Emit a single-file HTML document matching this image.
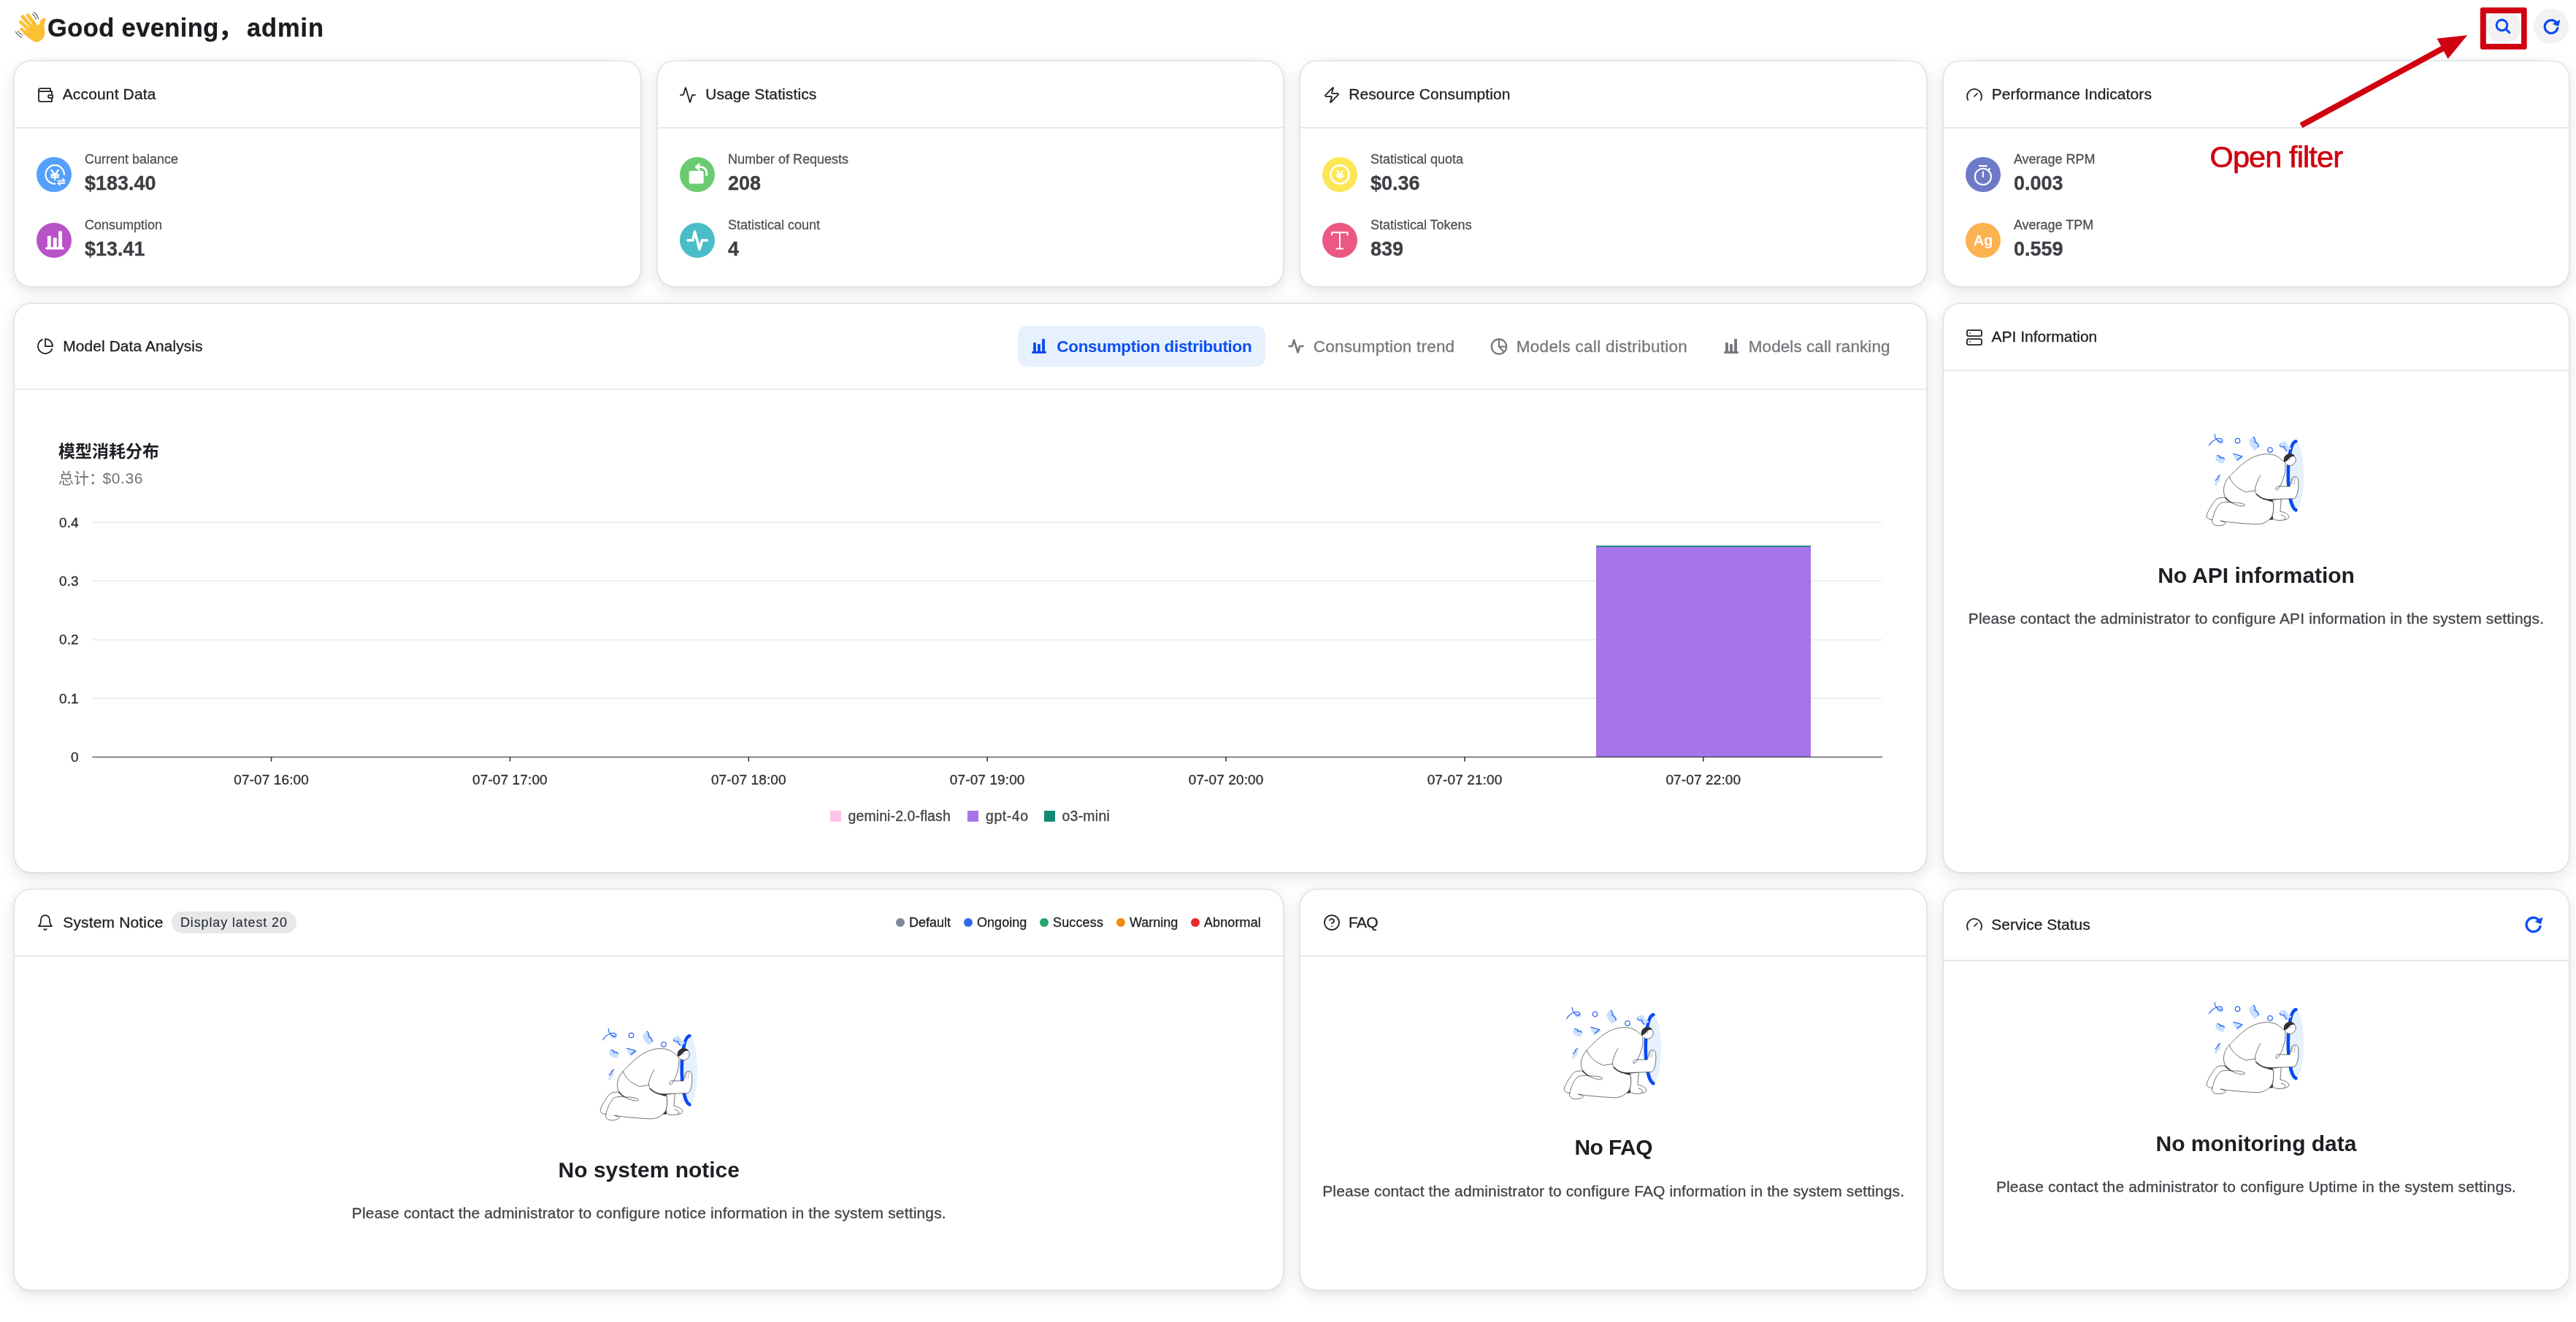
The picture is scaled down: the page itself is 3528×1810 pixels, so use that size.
<!DOCTYPE html>
<html lang="en"><head><meta charset="utf-8"><title>Dashboard</title>
<style>
*{box-sizing:border-box;margin:0;padding:0}
html,body{width:3528px;height:1810px;background:#fff}
#root{position:relative;width:3528px;height:1810px;overflow:hidden;background:#fff;font-family:"Liberation Sans","Noto Sans CJK SC",sans-serif;color:#1c1f23;will-change:transform;-webkit-text-stroke:.3px}
.abs{position:absolute;white-space:nowrap}
.card{position:absolute;background:#fff;border:1px solid #dedede;border-radius:24px;box-shadow:0 0 1.5px rgba(0,0,0,.10),0 6px 21px rgba(0,0,0,.115),0 0 10px rgba(0,0,0,.02)}
.hline{position:absolute;height:2px;background:#e9e9ea}
.ht{position:absolute;font-size:21px;line-height:30px;color:#1c1f23;white-space:nowrap}
.hi{position:absolute;width:24px;height:24px;fill:none;stroke:#1c1f23;stroke-width:1.75;stroke-linecap:round;stroke-linejoin:round}
.av{position:absolute;width:48px;height:48px;border-radius:50%}
.av svg{position:absolute;left:0;top:0;width:48px;height:48px}
.lb{position:absolute;font-size:18px;line-height:24px;color:#4d5054;white-space:nowrap}
.vl{position:absolute;font-size:27px;line-height:36px;font-weight:700;color:#3c3f43;white-space:nowrap}
.et{position:absolute;font-size:30px;line-height:42px;font-weight:700;color:#1c1f23;white-space:nowrap;text-align:center;-webkit-text-stroke:0}
.ed{position:absolute;font-size:21px;line-height:30px;color:#414448;white-space:nowrap;text-align:center}
.tab{position:absolute;font-size:21px;line-height:30px;color:#74777b;white-space:nowrap}
.sm{position:absolute;font-size:18px;line-height:24px;white-space:nowrap}
</style></head>
<body>
<div id="root">
<svg class="abs" role="img" aria-label="waving hand" style="left:10px;top:5px;width:80px;height:65px" viewBox="0 0 1627 1322">
<g stroke="#fcc033" stroke-linecap="round" fill="none">
<path d="M775 585L572 318" stroke-width="96"/>
<path d="M690 660L428 362" stroke-width="100"/>
<path d="M625 745L375 512" stroke-width="96"/>
<path d="M570 835L400 715" stroke-width="90"/>
</g>
<path fill="#fcc033" d="M700 540C760 590 830 610 880 585C915 560 905 500 935 455C960 415 1010 395 1045 405C1075 420 1060 470 1035 520C1010 580 1005 640 1025 720C1050 810 1035 900 975 975C915 1040 830 1075 770 1060C700 1040 610 960 520 890L440 830Z"/>
<path d="M1040 420C1070 470 1015 560 1015 650C1025 730 1050 810 1030 890C1000 980 900 1050 790 1058" fill="none" stroke="#ee9a1e" stroke-width="26" stroke-linecap="round" opacity=".45"/>
<path d="M770 1050C700 1030 610 955 520 885L445 828" fill="none" stroke="#f0a326" stroke-width="16" stroke-linecap="round" opacity=".4"/>
<g stroke="#fff" stroke-width="9" stroke-linecap="round" fill="none" opacity=".8"><path d="M698 580L545 405"/><path d="M622 678L458 498"/><path d="M568 790L425 682"/></g>
<g stroke="#444" stroke-width="22" stroke-linecap="round" fill="none"><path d="M735 240Q830 300 865 415"/><path d="M700 292Q775 345 800 435"/><path d="M235 785Q290 890 400 945"/><path d="M300 762Q345 840 428 882"/></g>
</svg>
<div class="abs" style="left:65px;top:13.5px;font-size:34.6px;line-height:48px;font-weight:700;color:#1a1c20;letter-spacing:.35px">Good evening<span style="margin-left:-1.2px;margin-right:4.6px">，</span><span style="letter-spacing:.8px">admin</span></div>
<div class="abs" style="left:3405px;top:12px;width:48px;height:48px;border-radius:50%;background:#f2f2f3"></div>
<svg class="abs" style="left:3405px;top:12px;width:48px;height:48px" viewBox="0 0 48 48"><g fill="none" stroke="#0c4ef2" stroke-width="3.1" stroke-linecap="round"><circle cx="21.5" cy="22.4" r="7.3"/><path d="M27.2 28.1l4.6 4.5"/></g></svg>
<div class="abs" style="left:3470px;top:12px;width:48px;height:48px;border-radius:50%;background:#f2f2f3"></div>
<svg class="abs" style="left:3470px;top:12px;width:48px;height:48px" viewBox="0 0 48 48"><path fill="none" stroke="#0c4ef2" stroke-width="3.2" stroke-linecap="round" d="M31.4 19.4A8.9 8.9 0 1 0 32.8 26.6"/><path fill="#0c4ef2" stroke="#0c4ef2" stroke-width="1.5" stroke-linejoin="round" d="M35.5 16.2L27.3 20.7L33.6 23Z"/></svg>
<div class="card" style="left:19px;top:83px;width:859px;height:310px"></div>
<svg class="hi" style="left:49.7px;top:118.4px" viewBox="0 0 24 24"><path d="M21 12V7H5a2 2 0 0 1 0-4h14v4"/><path d="M3 5v14a2 2 0 0 0 2 2h16v-5"/><path d="M18 12a2 2 0 0 0 0 4h4v-4Z"/></svg><div class="ht" style="left:85.7px;top:114.3px;letter-spacing:0.15px">Account Data</div><div class="hline" style="left:20px;top:174px;width:857px"></div><div class="av" style="left:50px;top:215px;background:#54a0fb"><svg viewBox="0 0 48 48"><g stroke="#fff" fill="none" stroke-linecap="round" stroke-linejoin="round" stroke-width="2.2"><path d="M37.9 23.9A12.7 12.7 0 1 0 25.2 36.6"/><path d="M20.6 18l4.6 6.5 4.6-6.5M25.2 24.5v6.4M20.2 24.5h10M20.2 27.6h10" stroke-width="2.3"/><path d="M29.4 32.6h9.1l-2.6-3M38.5 35.7h-9.1l2.6 2.4" stroke-width="1.9"/></g></svg></div><div class="lb" style="left:115.9px;top:205.6px">Current balance</div><div class="vl" style="left:115.9px;top:233px">$183.40</div><div class="av" style="left:50px;top:305px;background:#ba52c7"><svg viewBox="0 0 48 48"><g fill="#fff"><rect x="12.4" y="33.2" width="25.2" height="3.4" rx="1.4"/><rect x="14.9" y="18" width="4.9" height="16" rx="1"/><rect x="22.8" y="20.4" width="5" height="14" rx="1"/><rect x="30" y="11.4" width="5" height="23" rx="1"/></g></svg></div><div class="lb" style="left:115.9px;top:295.6px">Consumption</div><div class="vl" style="left:115.9px;top:323px">$13.41</div>
<div class="card" style="left:900px;top:83px;width:858px;height:310px"></div>
<svg class="hi" style="left:929.7px;top:118.4px" viewBox="0 0 24 24"><path d="M22 12h-2.48a2 2 0 0 0-1.93 1.46l-2.35 8.36a.25.25 0 0 1-.48 0L9.24 2.18a.25.25 0 0 0-.48 0l-2.35 8.36A2 2 0 0 1 4.49 12H2"/></svg><div class="ht" style="left:966.2px;top:114.3px;letter-spacing:0.1px">Usage Statistics</div><div class="hline" style="left:901px;top:174px;width:856px"></div><div class="av" style="left:931px;top:215px;background:#6bcb70"><svg viewBox="0 0 48 48"><rect x="12.7" y="19" width="20" height="17.6" rx="2.4" fill="#fff"/><g stroke="#fff" fill="none" stroke-linecap="round" stroke-linejoin="round" stroke-width="2.8"><path d="M36.7 24.5v-3.2a7.6 7.6 0 0 0-7.6-7.6h-6.4"/><path d="M26.4 10l-4 3.7 4 3.6"/></g></svg></div><div class="lb" style="left:996.9px;top:205.6px">Number of Requests</div><div class="vl" style="left:996.9px;top:233px">208</div><div class="av" style="left:931px;top:305px;background:#4abec8"><svg viewBox="0 0 48 48"><path stroke="#fff" fill="none" stroke-linecap="round" stroke-linejoin="round" stroke-width="3.5" d="M10.9 24.1h7l2.7-12.1 6.4 24.2 3.6-12.1h6.6"/></svg></div><div class="lb" style="left:996.9px;top:295.6px">Statistical count</div><div class="vl" style="left:996.9px;top:323px">4</div>
<div class="card" style="left:1780px;top:83px;width:859px;height:310px"></div>
<svg class="hi" style="left:1811.7px;top:118.4px" viewBox="0 0 24 24"><path d="M4 14a1 1 0 0 1-.78-1.63l9.9-10.2a.5.5 0 0 1 .86.46l-1.92 6.02A1 1 0 0 0 13 10h7a1 1 0 0 1 .78 1.63l-9.9 10.2a.5.5 0 0 1-.86-.46l1.92-6.02A1 1 0 0 0 11 14z"/></svg><div class="ht" style="left:1847.2px;top:114.3px;letter-spacing:0.1px">Resource Consumption</div><div class="hline" style="left:1781px;top:174px;width:857px"></div><div class="av" style="left:1811px;top:215px;background:#fce655"><svg viewBox="0 0 48 48"><g stroke="#fff" fill="none" stroke-linecap="round" stroke-linejoin="round" stroke-width="2.6"><circle cx="24" cy="23.9" r="12.5"/><path d="M20.3 19.2l3.7 4.2 3.7-4.2M24 23.4v5.7M19.6 24.5h8.8M19.6 27h8.8" stroke-width="2.2"/></g></svg></div><div class="lb" style="left:1876.9px;top:205.6px">Statistical quota</div><div class="vl" style="left:1876.9px;top:233px">$0.36</div><div class="av" style="left:1811px;top:305px;background:#eb5882"><svg viewBox="0 0 48 48"><path stroke="#fff" fill="none" stroke-linecap="round" stroke-linejoin="round" stroke-width="2" d="M13.1 16.8v-3.6h21.5v3.6M24 13.2v22.2M19.4 35.4h8.8"/></svg></div><div class="lb" style="left:1876.9px;top:295.6px">Statistical Tokens</div><div class="vl" style="left:1876.9px;top:323px">839</div>
<div class="card" style="left:2661px;top:83px;width:858px;height:310px"></div>
<svg class="hi" style="left:2691.7px;top:118.4px" viewBox="0 0 24 24"><path d="m12 14 4-4"/><path d="M3.34 19a10 10 0 1 1 17.32 0"/></svg><div class="ht" style="left:2727.7px;top:114.3px;letter-spacing:0.1px">Performance Indicators</div><div class="hline" style="left:2662px;top:174px;width:856px"></div><div class="av" style="left:2692px;top:215px;background:#6e7ac8"><svg viewBox="0 0 48 48"><g stroke="#fff" fill="none" stroke-linecap="round" stroke-linejoin="round" stroke-width="2.1"><circle cx="23.9" cy="26.9" r="11.1"/><path d="M18.8 12.1h10M23.9 20.2v6.7M30.9 18.4l2-2.4"/></g></svg></div><div class="lb" style="left:2757.9px;top:205.6px">Average RPM</div><div class="vl" style="left:2757.9px;top:233px">0.003</div><div class="av" style="left:2692px;top:305px;background:#fcb250"><svg viewBox="0 0 48 48"><text x="24" y="31.2" text-anchor="middle" font-family="Liberation Sans,sans-serif" font-weight="700" font-size="20" fill="#fff">Ag</text></svg></div><div class="lb" style="left:2757.9px;top:295.6px">Average TPM</div><div class="vl" style="left:2757.9px;top:323px">0.559</div>
<div class="card" style="left:19px;top:415px;width:2620px;height:780px"></div>
<svg class="hi" style="left:50px;top:461.7px" viewBox="0 0 24 24"><path d="M21.21 15.89A10 10 0 1 1 8 2.83"/><path d="M22 12A10 10 0 0 0 12 2v10z"/></svg>
<div class="ht" style="left:86.3px;top:459.2px;letter-spacing:.05px">Model Data Analysis</div>
<div class="hline" style="left:20px;top:532px;width:2618px"></div>
<div class="abs" style="left:1394px;top:445.5px;width:339px;height:56px;border-radius:12px;background:#e6f1fd"></div>
<svg class="abs" style="left:1413px;top:463px;width:21px;height:21px" viewBox="0 0 21 21"><g fill="#0c4ef2"><rect x="0.1" y="18.1" width="19.9" height="2.8" rx="1.3"/><rect x="2.1" y="5.9" width="3.85" height="14" rx=".7"/><rect x="8.05" y="8" width="3.85" height="12" rx=".7"/><rect x="14.1" y="0.9" width="3.9" height="19" rx=".7"/></g></svg>
<div class="tab" style="left:1447.3px;top:459.6px;font-size:22.5px;color:#0c4ef2;font-weight:700;letter-spacing:-.33px;-webkit-text-stroke:0">Consumption distribution</div>
<svg class="abs" style="left:1763px;top:462px;width:24px;height:24px" viewBox="0 0 24 24"><path fill="none" stroke="#74777b" stroke-width="2.6" stroke-linecap="round" stroke-linejoin="round" d="M2.5 12h4.2l2.4-8.5 5.4 17 2.6-8.5h4.4"/></svg>
<div class="tab" style="left:1798.8px;top:459.6px;font-size:22.5px;letter-spacing:.2px">Consumption trend</div>
<svg class="abs" style="left:2041px;top:461.5px;width:24px;height:24px" viewBox="0 0 24 24"><g fill="none" stroke="#74777b" stroke-width="2.2" stroke-linecap="round" stroke-linejoin="round"><circle cx="12" cy="12.5" r="10.2"/><path d="M12 2.5v10h10M12 12.5l6.8 7.4"/></g></svg>
<div class="tab" style="left:2076.8px;top:459.6px;font-size:22.5px;letter-spacing:.28px">Models call distribution</div>
<svg class="abs" style="left:2361px;top:463px;width:21px;height:21px" viewBox="0 0 21 21"><g fill="#74777b"><rect x="0.1" y="18.1" width="19.9" height="2.8" rx="1.3"/><rect x="2.1" y="5.9" width="3.85" height="14" rx=".7"/><rect x="8.05" y="8" width="3.85" height="12" rx=".7"/><rect x="14.1" y="0.9" width="3.9" height="19" rx=".7"/></g></svg>
<div class="tab" style="left:2394.8px;top:459.6px;font-size:22.5px;letter-spacing:.06px">Models call ranking</div>
<div class="abs" style="left:80px;top:602px;font-size:23px;line-height:32px;font-weight:700;color:#1c1f23;-webkit-text-stroke:0">模型消耗分布</div>
<div class="abs" style="left:80px;top:640.5px;font-size:21px;line-height:28px;color:#6f7276;-webkit-text-stroke:0">总计：<span style="margin-left:-2.5px;letter-spacing:.6px">$0.36</span></div>
<svg class="abs" style="left:0;top:0" width="3528" height="1810" viewBox="0 0 3528 1810" font-family="Liberation Sans, sans-serif" font-size="18" stroke-width=".3">
<line x1="126.4" x2="2578" y1="715.2" y2="715.2" stroke="#e9eaeb" stroke-width="1.5"/>
<line x1="126.4" x2="2578" y1="795.5" y2="795.5" stroke="#e9eaeb" stroke-width="1.5"/>
<line x1="126.4" x2="2578" y1="876.0" y2="876.0" stroke="#e9eaeb" stroke-width="1.5"/>
<line x1="126.4" x2="2578" y1="956.3" y2="956.3" stroke="#e9eaeb" stroke-width="1.5"/>
<text x="107.5" y="721.6" text-anchor="end" fill="#2a2d31" stroke="#2a2d31" font-size="19">0.4</text>
<text x="107.5" y="801.9" text-anchor="end" fill="#2a2d31" stroke="#2a2d31" font-size="19">0.3</text>
<text x="107.5" y="882.4" text-anchor="end" fill="#2a2d31" stroke="#2a2d31" font-size="19">0.2</text>
<text x="107.5" y="962.6999999999999" text-anchor="end" fill="#2a2d31" stroke="#2a2d31" font-size="19">0.1</text>
<text x="107.5" y="1043.0" text-anchor="end" fill="#2a2d31" stroke="#2a2d31" font-size="19">0</text>
<rect x="2186" y="748.4" width="294" height="288.2" fill="#a675e8"/>
<rect x="2186" y="747" width="294" height="1.8" fill="#0f8474"/>
<line x1="126.4" x2="2578" y1="1036.5" y2="1036.5" stroke="#22252a" stroke-width="1.2"/>
<line x1="371.6" x2="371.6" y1="1036.6" y2="1042.6" stroke="#2a2d31" stroke-width="1.5"/>
<text x="371.6" y="1073.5" text-anchor="middle" fill="#2a2d31" stroke="#2a2d31" font-size="19" letter-spacing="0.12">07-07 16:00</text>
<line x1="698.4" x2="698.4" y1="1036.6" y2="1042.6" stroke="#2a2d31" stroke-width="1.5"/>
<text x="698.4" y="1073.5" text-anchor="middle" fill="#2a2d31" stroke="#2a2d31" font-size="19" letter-spacing="0.12">07-07 17:00</text>
<line x1="1025.3" x2="1025.3" y1="1036.6" y2="1042.6" stroke="#2a2d31" stroke-width="1.5"/>
<text x="1025.3" y="1073.5" text-anchor="middle" fill="#2a2d31" stroke="#2a2d31" font-size="19" letter-spacing="0.12">07-07 18:00</text>
<line x1="1352.2" x2="1352.2" y1="1036.6" y2="1042.6" stroke="#2a2d31" stroke-width="1.5"/>
<text x="1352.2" y="1073.5" text-anchor="middle" fill="#2a2d31" stroke="#2a2d31" font-size="19" letter-spacing="0.12">07-07 19:00</text>
<line x1="1679.1" x2="1679.1" y1="1036.6" y2="1042.6" stroke="#2a2d31" stroke-width="1.5"/>
<text x="1679.1" y="1073.5" text-anchor="middle" fill="#2a2d31" stroke="#2a2d31" font-size="19" letter-spacing="0.12">07-07 20:00</text>
<line x1="2006.0" x2="2006.0" y1="1036.6" y2="1042.6" stroke="#2a2d31" stroke-width="1.5"/>
<text x="2006.0" y="1073.5" text-anchor="middle" fill="#2a2d31" stroke="#2a2d31" font-size="19" letter-spacing="0.12">07-07 21:00</text>
<line x1="2332.8" x2="2332.8" y1="1036.6" y2="1042.6" stroke="#2a2d31" stroke-width="1.5"/>
<text x="2332.8" y="1073.5" text-anchor="middle" fill="#2a2d31" stroke="#2a2d31" font-size="19" letter-spacing="0.12">07-07 22:00</text>
<rect x="1137" y="1110" width="15" height="15" fill="#ffc3ea"/>
<text x="1161.5" y="1124.4" fill="#3f4246" stroke="#3f4246" font-size="19.5" letter-spacing=".1">gemini-2.0-flash</text>
<rect x="1325" y="1110" width="15" height="15" fill="#a675e8"/>
<text x="1350" y="1124.4" fill="#3f4246" stroke="#3f4246" font-size="19.5" letter-spacing=".55">gpt-4o</text>
<rect x="1430" y="1110" width="15" height="15" fill="#148a76"/>
<text x="1454.5" y="1124.4" fill="#3f4246" stroke="#3f4246" font-size="19.5" letter-spacing=".23">o3-mini</text>
</svg>
<div class="card" style="left:2661px;top:415px;width:858px;height:780px"></div>
<svg class="hi" style="left:2692px;top:449.6px" viewBox="0 0 24 24"><rect width="20" height="8" x="2" y="2" rx="2" ry="2"/><rect width="20" height="8" x="2" y="14" rx="2" ry="2"/><line x1="6" x2="6.01" y1="6" y2="6"/><line x1="6" x2="6.01" y1="18" y2="18"/></svg><div class="ht" style="left:2727.5px;top:445.7px;letter-spacing:0px">API Information</div><div class="hline" style="left:2662px;top:506px;width:856px"></div><svg class="abs" style="left:3004.5px;top:574.9px;width:170px;height:160px" viewBox="0 0 1405 1322"><ellipse cx="1142" cy="630" rx="98" ry="396" fill="#e5f1ff"/>
<path d="M1152 242C1090 252 1056 470 1066 700C1076 880 1108 1000 1152 1020" fill="none" stroke="#0a4af3" stroke-width="38" stroke-linecap="round"/>
<g fill="#c6e0fd">
<path d="M255 225L325 215L330 262L290 278L262 258Z"/>
<path d="M650 198L700 215L738 300L685 348L640 292L618 240Z"/>
<path d="M965 262L1030 240L1060 290L1105 320L1060 352L1010 330L968 300Z"/>
<path d="M245 405L300 398L345 440L335 492L290 485L245 455Z"/>
<path d="M432 383L560 425L485 480Z"/>
<path d="M262 642L297 625L292 690L262 716L256 742L234 742L240 690Z"/>
</g>
<g fill="none" stroke="#0a4af3" stroke-width="8.5" stroke-linecap="round" stroke-linejoin="round">
<path d="M170 288C190 250 225 225 262 212C300 200 325 215 320 238C312 262 272 250 250 215C238 195 232 178 232 160"/>
<circle cx="492" cy="235" r="27"/>
<path d="M668 192C695 200 690 225 686 245C700 262 725 262 730 295C730 302 726 306 722 306"/>
<circle cx="860" cy="338" r="27"/>
<path d="M968 285C975 300 995 312 1015 300C1035 310 1020 345 1050 350"/>
<path d="M262 403C285 400 295 415 296 432C310 422 335 420 343 445"/>
<path d="M445 383L545 410L490 450"/>
<path d="M295 622C285 635 262 635 266 662C262 672 250 680 240 682"/>
</g>
<g fill="#fff" stroke="#2a2c2f" stroke-width="5.5" stroke-linejoin="round" stroke-linecap="round">
<path stroke="none" d="M345 878C300 875 262 880 232 918C190 975 150 1040 142 1085C140 1110 165 1122 206 1130C195 1165 215 1190 262 1195C310 1198 350 1185 358 1165C345 1150 320 1145 298 1142C400 1160 560 1172 700 1180C790 1182 850 1140 880 1090C900 1040 910 980 890 915Z"/>
<path fill="none" d="M345 878C300 875 262 880 232 918C190 975 150 1040 142 1085C140 1110 165 1122 206 1130C195 1165 215 1190 262 1195C310 1198 350 1185 358 1165C345 1150 320 1145 298 1142C400 1160 560 1172 700 1180C790 1182 850 1140 880 1090C900 1040 910 980 890 915"/>
<path d="M985 895C985 950 975 1000 975 1035C1030 1045 1075 1070 1072 1100C1068 1125 1010 1138 950 1135C905 1132 885 1120 886 1090C900 1030 905 960 890 910Z"/>
<path d="M985 1075C1010 1080 1030 1092 1032 1108C1032 1118 1026 1124 1018 1128" fill="none"/>
<path stroke="none" d="M1010 470C960 410 900 385 820 385C700 390 600 440 480 560C440 598 400 640 400 640C350 700 325 760 338 830C345 870 365 905 400 925C470 965 560 990 575 965C575 945 480 930 432 935C520 900 640 860 700 840C760 890 830 910 890 897L1130 890C1160 880 1175 820 1180 760C1182 700 1180 665 1165 650C1150 635 1115 640 1105 670C1095 700 1090 730 1082 752L945 750C925 760 918 790 935 795C965 780 1000 700 1022 620C1035 570 1035 520 1030 505Z"/>
<path fill="none" d="M1010 470C960 410 900 385 820 385C700 390 600 440 480 560C440 598 400 640 400 640C350 700 325 760 338 830C345 870 365 905 400 925C470 965 560 990 575 965C575 945 480 930 432 935"/>
<path fill="none" d="M206 1130C215 1075 248 990 290 950C318 926 380 926 432 935"/>
<path fill="none" d="M700 840C760 890 830 910 890 897L1130 890C1160 880 1175 820 1180 760C1182 700 1180 665 1165 650C1150 635 1115 640 1105 670C1095 700 1090 730 1082 752L945 750C925 760 918 790 935 795C965 780 1000 700 1022 620C1035 570 1035 520 1030 505"/>
<path d="M750 625C715 690 690 750 690 795C695 840 730 880 800 900" fill="none"/>
<path d="M400 645C420 700 450 735 500 770C540 795 570 810 590 815C620 808 660 802 690 800" fill="none"/>
<path d="M1120 648C1112 680 1108 705 1108 725M1145 650C1138 680 1136 705 1136 728" fill="none" stroke-width="3"/>
</g>
<path d="M345 878C365 910 400 928 432 935C400 915 372 895 358 872Z" fill="#2e3033"/>
<path d="M700 840C750 890 830 915 890 925L886 897C820 905 750 880 712 835Z" fill="#2e3033"/>
<path d="M850 1130L890 1085L892 1128Z" fill="#2e3033"/>
<circle cx="1085" cy="450" r="66" fill="#fff" stroke="#2a2c2f" stroke-width="5.5"/>
<path d="M1018 478C1000 420 1045 375 1095 382C1120 385 1135 398 1142 412C1110 405 1080 420 1068 445C1055 465 1035 475 1018 478Z" fill="#2e3033"/>
<ellipse cx="1080" cy="440" rx="12" ry="8" fill="#fff" stroke="#2e3033" stroke-width="3" transform="rotate(-30 1080 440)"/>
</svg>
<div class="et" style="left:2670px;width:840px;top:767.0px;letter-spacing:-0.05px">No API information</div>
<div class="ed" style="left:2670px;width:840px;top:831.5px;letter-spacing:0.13px">Please contact the administrator to configure API information in the system settings.</div>
<div class="card" style="left:19px;top:1217px;width:1739px;height:550px"></div>
<svg class="hi" style="left:50px;top:1251px" viewBox="0 0 24 24"><path d="M6 8a6 6 0 0 1 12 0c0 7 3 9 3 9H3s3-2 3-9"/><path d="M10.3 21a1.94 1.94 0 0 0 3.4 0"/></svg><div class="ht" style="left:86.3px;top:1247.5px;letter-spacing:0.15px">System Notice</div><div class="abs" style="left:235px;top:1248px;width:171px;height:30px;border-radius:15px;background:#e6e8ea"></div><div class="sm" style="left:247px;top:1251px;color:#2b2e32;letter-spacing:.87px;-webkit-text-stroke:.12px">Display latest 20</div><div class="abs" style="left:1227px;top:1257px;width:12px;height:12px;border-radius:50%;background:#7c899a"></div><div class="sm" style="left:1245px;top:1251px;color:#1c1f23;letter-spacing:0px">Default</div><div class="abs" style="left:1320px;top:1257px;width:12px;height:12px;border-radius:50%;background:#3168ee"></div><div class="sm" style="left:1338px;top:1251px;color:#1c1f23;letter-spacing:0.05px">Ongoing</div><div class="abs" style="left:1424px;top:1257px;width:12px;height:12px;border-radius:50%;background:#21a96a"></div><div class="sm" style="left:1442px;top:1251px;color:#1c1f23;letter-spacing:0.15px">Success</div><div class="abs" style="left:1529px;top:1257px;width:12px;height:12px;border-radius:50%;background:#ef8c0d"></div><div class="sm" style="left:1547px;top:1251px;color:#1c1f23;letter-spacing:0px">Warning</div><div class="abs" style="left:1631px;top:1257px;width:12px;height:12px;border-radius:50%;background:#e52a31"></div><div class="sm" style="left:1649px;top:1251px;color:#1c1f23;letter-spacing:0.1px">Abnormal</div><div class="hline" style="left:20px;top:1308px;width:1737px"></div><svg class="abs" style="left:804.7px;top:1389.0px;width:170px;height:160px" viewBox="0 0 1405 1322"><ellipse cx="1142" cy="630" rx="98" ry="396" fill="#e5f1ff"/>
<path d="M1152 242C1090 252 1056 470 1066 700C1076 880 1108 1000 1152 1020" fill="none" stroke="#0a4af3" stroke-width="38" stroke-linecap="round"/>
<g fill="#c6e0fd">
<path d="M255 225L325 215L330 262L290 278L262 258Z"/>
<path d="M650 198L700 215L738 300L685 348L640 292L618 240Z"/>
<path d="M965 262L1030 240L1060 290L1105 320L1060 352L1010 330L968 300Z"/>
<path d="M245 405L300 398L345 440L335 492L290 485L245 455Z"/>
<path d="M432 383L560 425L485 480Z"/>
<path d="M262 642L297 625L292 690L262 716L256 742L234 742L240 690Z"/>
</g>
<g fill="none" stroke="#0a4af3" stroke-width="8.5" stroke-linecap="round" stroke-linejoin="round">
<path d="M170 288C190 250 225 225 262 212C300 200 325 215 320 238C312 262 272 250 250 215C238 195 232 178 232 160"/>
<circle cx="492" cy="235" r="27"/>
<path d="M668 192C695 200 690 225 686 245C700 262 725 262 730 295C730 302 726 306 722 306"/>
<circle cx="860" cy="338" r="27"/>
<path d="M968 285C975 300 995 312 1015 300C1035 310 1020 345 1050 350"/>
<path d="M262 403C285 400 295 415 296 432C310 422 335 420 343 445"/>
<path d="M445 383L545 410L490 450"/>
<path d="M295 622C285 635 262 635 266 662C262 672 250 680 240 682"/>
</g>
<g fill="#fff" stroke="#2a2c2f" stroke-width="5.5" stroke-linejoin="round" stroke-linecap="round">
<path stroke="none" d="M345 878C300 875 262 880 232 918C190 975 150 1040 142 1085C140 1110 165 1122 206 1130C195 1165 215 1190 262 1195C310 1198 350 1185 358 1165C345 1150 320 1145 298 1142C400 1160 560 1172 700 1180C790 1182 850 1140 880 1090C900 1040 910 980 890 915Z"/>
<path fill="none" d="M345 878C300 875 262 880 232 918C190 975 150 1040 142 1085C140 1110 165 1122 206 1130C195 1165 215 1190 262 1195C310 1198 350 1185 358 1165C345 1150 320 1145 298 1142C400 1160 560 1172 700 1180C790 1182 850 1140 880 1090C900 1040 910 980 890 915"/>
<path d="M985 895C985 950 975 1000 975 1035C1030 1045 1075 1070 1072 1100C1068 1125 1010 1138 950 1135C905 1132 885 1120 886 1090C900 1030 905 960 890 910Z"/>
<path d="M985 1075C1010 1080 1030 1092 1032 1108C1032 1118 1026 1124 1018 1128" fill="none"/>
<path stroke="none" d="M1010 470C960 410 900 385 820 385C700 390 600 440 480 560C440 598 400 640 400 640C350 700 325 760 338 830C345 870 365 905 400 925C470 965 560 990 575 965C575 945 480 930 432 935C520 900 640 860 700 840C760 890 830 910 890 897L1130 890C1160 880 1175 820 1180 760C1182 700 1180 665 1165 650C1150 635 1115 640 1105 670C1095 700 1090 730 1082 752L945 750C925 760 918 790 935 795C965 780 1000 700 1022 620C1035 570 1035 520 1030 505Z"/>
<path fill="none" d="M1010 470C960 410 900 385 820 385C700 390 600 440 480 560C440 598 400 640 400 640C350 700 325 760 338 830C345 870 365 905 400 925C470 965 560 990 575 965C575 945 480 930 432 935"/>
<path fill="none" d="M206 1130C215 1075 248 990 290 950C318 926 380 926 432 935"/>
<path fill="none" d="M700 840C760 890 830 910 890 897L1130 890C1160 880 1175 820 1180 760C1182 700 1180 665 1165 650C1150 635 1115 640 1105 670C1095 700 1090 730 1082 752L945 750C925 760 918 790 935 795C965 780 1000 700 1022 620C1035 570 1035 520 1030 505"/>
<path d="M750 625C715 690 690 750 690 795C695 840 730 880 800 900" fill="none"/>
<path d="M400 645C420 700 450 735 500 770C540 795 570 810 590 815C620 808 660 802 690 800" fill="none"/>
<path d="M1120 648C1112 680 1108 705 1108 725M1145 650C1138 680 1136 705 1136 728" fill="none" stroke-width="3"/>
</g>
<path d="M345 878C365 910 400 928 432 935C400 915 372 895 358 872Z" fill="#2e3033"/>
<path d="M700 840C750 890 830 915 890 925L886 897C820 905 750 880 712 835Z" fill="#2e3033"/>
<path d="M850 1130L890 1085L892 1128Z" fill="#2e3033"/>
<circle cx="1085" cy="450" r="66" fill="#fff" stroke="#2a2c2f" stroke-width="5.5"/>
<path d="M1018 478C1000 420 1045 375 1095 382C1120 385 1135 398 1142 412C1110 405 1080 420 1068 445C1055 465 1035 475 1018 478Z" fill="#2e3033"/>
<ellipse cx="1080" cy="440" rx="12" ry="8" fill="#fff" stroke="#2e3033" stroke-width="3" transform="rotate(-30 1080 440)"/>
</svg>
<div class="et" style="left:468.79999999999995px;width:840px;top:1581.1px;letter-spacing:0px">No system notice</div>
<div class="ed" style="left:468.79999999999995px;width:840px;top:1645.6px;letter-spacing:0.15px">Please contact the administrator to configure notice information in the system settings.</div>
<div class="card" style="left:1780px;top:1217px;width:859px;height:550px"></div>
<svg class="hi" style="left:1812px;top:1251px" viewBox="0 0 24 24"><circle cx="12" cy="12" r="10"/><path d="M9.09 9a3 3 0 0 1 5.83 1c0 2-3 3-3 3"/><path d="M12 17h.01"/></svg><div class="ht" style="left:1847px;top:1247.5px;letter-spacing:-0.7px">FAQ</div><div class="hline" style="left:1781px;top:1308px;width:857px"></div><svg class="abs" style="left:2125.4px;top:1359.5px;width:170px;height:160px" viewBox="0 0 1405 1322"><ellipse cx="1142" cy="630" rx="98" ry="396" fill="#e5f1ff"/>
<path d="M1152 242C1090 252 1056 470 1066 700C1076 880 1108 1000 1152 1020" fill="none" stroke="#0a4af3" stroke-width="38" stroke-linecap="round"/>
<g fill="#c6e0fd">
<path d="M255 225L325 215L330 262L290 278L262 258Z"/>
<path d="M650 198L700 215L738 300L685 348L640 292L618 240Z"/>
<path d="M965 262L1030 240L1060 290L1105 320L1060 352L1010 330L968 300Z"/>
<path d="M245 405L300 398L345 440L335 492L290 485L245 455Z"/>
<path d="M432 383L560 425L485 480Z"/>
<path d="M262 642L297 625L292 690L262 716L256 742L234 742L240 690Z"/>
</g>
<g fill="none" stroke="#0a4af3" stroke-width="8.5" stroke-linecap="round" stroke-linejoin="round">
<path d="M170 288C190 250 225 225 262 212C300 200 325 215 320 238C312 262 272 250 250 215C238 195 232 178 232 160"/>
<circle cx="492" cy="235" r="27"/>
<path d="M668 192C695 200 690 225 686 245C700 262 725 262 730 295C730 302 726 306 722 306"/>
<circle cx="860" cy="338" r="27"/>
<path d="M968 285C975 300 995 312 1015 300C1035 310 1020 345 1050 350"/>
<path d="M262 403C285 400 295 415 296 432C310 422 335 420 343 445"/>
<path d="M445 383L545 410L490 450"/>
<path d="M295 622C285 635 262 635 266 662C262 672 250 680 240 682"/>
</g>
<g fill="#fff" stroke="#2a2c2f" stroke-width="5.5" stroke-linejoin="round" stroke-linecap="round">
<path stroke="none" d="M345 878C300 875 262 880 232 918C190 975 150 1040 142 1085C140 1110 165 1122 206 1130C195 1165 215 1190 262 1195C310 1198 350 1185 358 1165C345 1150 320 1145 298 1142C400 1160 560 1172 700 1180C790 1182 850 1140 880 1090C900 1040 910 980 890 915Z"/>
<path fill="none" d="M345 878C300 875 262 880 232 918C190 975 150 1040 142 1085C140 1110 165 1122 206 1130C195 1165 215 1190 262 1195C310 1198 350 1185 358 1165C345 1150 320 1145 298 1142C400 1160 560 1172 700 1180C790 1182 850 1140 880 1090C900 1040 910 980 890 915"/>
<path d="M985 895C985 950 975 1000 975 1035C1030 1045 1075 1070 1072 1100C1068 1125 1010 1138 950 1135C905 1132 885 1120 886 1090C900 1030 905 960 890 910Z"/>
<path d="M985 1075C1010 1080 1030 1092 1032 1108C1032 1118 1026 1124 1018 1128" fill="none"/>
<path stroke="none" d="M1010 470C960 410 900 385 820 385C700 390 600 440 480 560C440 598 400 640 400 640C350 700 325 760 338 830C345 870 365 905 400 925C470 965 560 990 575 965C575 945 480 930 432 935C520 900 640 860 700 840C760 890 830 910 890 897L1130 890C1160 880 1175 820 1180 760C1182 700 1180 665 1165 650C1150 635 1115 640 1105 670C1095 700 1090 730 1082 752L945 750C925 760 918 790 935 795C965 780 1000 700 1022 620C1035 570 1035 520 1030 505Z"/>
<path fill="none" d="M1010 470C960 410 900 385 820 385C700 390 600 440 480 560C440 598 400 640 400 640C350 700 325 760 338 830C345 870 365 905 400 925C470 965 560 990 575 965C575 945 480 930 432 935"/>
<path fill="none" d="M206 1130C215 1075 248 990 290 950C318 926 380 926 432 935"/>
<path fill="none" d="M700 840C760 890 830 910 890 897L1130 890C1160 880 1175 820 1180 760C1182 700 1180 665 1165 650C1150 635 1115 640 1105 670C1095 700 1090 730 1082 752L945 750C925 760 918 790 935 795C965 780 1000 700 1022 620C1035 570 1035 520 1030 505"/>
<path d="M750 625C715 690 690 750 690 795C695 840 730 880 800 900" fill="none"/>
<path d="M400 645C420 700 450 735 500 770C540 795 570 810 590 815C620 808 660 802 690 800" fill="none"/>
<path d="M1120 648C1112 680 1108 705 1108 725M1145 650C1138 680 1136 705 1136 728" fill="none" stroke-width="3"/>
</g>
<path d="M345 878C365 910 400 928 432 935C400 915 372 895 358 872Z" fill="#2e3033"/>
<path d="M700 840C750 890 830 915 890 925L886 897C820 905 750 880 712 835Z" fill="#2e3033"/>
<path d="M850 1130L890 1085L892 1128Z" fill="#2e3033"/>
<circle cx="1085" cy="450" r="66" fill="#fff" stroke="#2a2c2f" stroke-width="5.5"/>
<path d="M1018 478C1000 420 1045 375 1095 382C1120 385 1135 398 1142 412C1110 405 1080 420 1068 445C1055 465 1035 475 1018 478Z" fill="#2e3033"/>
<ellipse cx="1080" cy="440" rx="12" ry="8" fill="#fff" stroke="#2e3033" stroke-width="3" transform="rotate(-30 1080 440)"/>
</svg>
<div class="et" style="left:1789.6999999999998px;width:840px;top:1550.4px;letter-spacing:-0.6px">No FAQ</div>
<div class="ed" style="left:1789.6999999999998px;width:840px;top:1616.1px;letter-spacing:0.12px">Please contact the administrator to configure FAQ information in the system settings.</div>
<div class="card" style="left:2661px;top:1217px;width:858px;height:550px"></div>
<svg class="hi" style="left:2692px;top:1254px" viewBox="0 0 24 24"><path d="m12 14 4-4"/><path d="M3.34 19a10 10 0 1 1 17.32 0"/></svg><div class="ht" style="left:2727.3px;top:1250.5px;letter-spacing:0px">Service Status</div><svg class="abs" style="left:3456.2px;top:1252px;width:27px;height:27px" viewBox="0 0 27 27"><path fill="none" stroke="#0c4ef2" stroke-width="3.3" stroke-linecap="round" d="M21.6 8.6A9.6 9.6 0 1 0 23 16.4"/><path fill="#0c4ef2" stroke="#0c4ef2" stroke-width="1.5" stroke-linejoin="round" d="M25.4 4.9L17 9.8L23.6 12.2Z"/></svg><div class="hline" style="left:2662px;top:1314px;width:856px"></div><svg class="abs" style="left:3005.3px;top:1352.6px;width:170px;height:160px" viewBox="0 0 1405 1322"><ellipse cx="1142" cy="630" rx="98" ry="396" fill="#e5f1ff"/>
<path d="M1152 242C1090 252 1056 470 1066 700C1076 880 1108 1000 1152 1020" fill="none" stroke="#0a4af3" stroke-width="38" stroke-linecap="round"/>
<g fill="#c6e0fd">
<path d="M255 225L325 215L330 262L290 278L262 258Z"/>
<path d="M650 198L700 215L738 300L685 348L640 292L618 240Z"/>
<path d="M965 262L1030 240L1060 290L1105 320L1060 352L1010 330L968 300Z"/>
<path d="M245 405L300 398L345 440L335 492L290 485L245 455Z"/>
<path d="M432 383L560 425L485 480Z"/>
<path d="M262 642L297 625L292 690L262 716L256 742L234 742L240 690Z"/>
</g>
<g fill="none" stroke="#0a4af3" stroke-width="8.5" stroke-linecap="round" stroke-linejoin="round">
<path d="M170 288C190 250 225 225 262 212C300 200 325 215 320 238C312 262 272 250 250 215C238 195 232 178 232 160"/>
<circle cx="492" cy="235" r="27"/>
<path d="M668 192C695 200 690 225 686 245C700 262 725 262 730 295C730 302 726 306 722 306"/>
<circle cx="860" cy="338" r="27"/>
<path d="M968 285C975 300 995 312 1015 300C1035 310 1020 345 1050 350"/>
<path d="M262 403C285 400 295 415 296 432C310 422 335 420 343 445"/>
<path d="M445 383L545 410L490 450"/>
<path d="M295 622C285 635 262 635 266 662C262 672 250 680 240 682"/>
</g>
<g fill="#fff" stroke="#2a2c2f" stroke-width="5.5" stroke-linejoin="round" stroke-linecap="round">
<path stroke="none" d="M345 878C300 875 262 880 232 918C190 975 150 1040 142 1085C140 1110 165 1122 206 1130C195 1165 215 1190 262 1195C310 1198 350 1185 358 1165C345 1150 320 1145 298 1142C400 1160 560 1172 700 1180C790 1182 850 1140 880 1090C900 1040 910 980 890 915Z"/>
<path fill="none" d="M345 878C300 875 262 880 232 918C190 975 150 1040 142 1085C140 1110 165 1122 206 1130C195 1165 215 1190 262 1195C310 1198 350 1185 358 1165C345 1150 320 1145 298 1142C400 1160 560 1172 700 1180C790 1182 850 1140 880 1090C900 1040 910 980 890 915"/>
<path d="M985 895C985 950 975 1000 975 1035C1030 1045 1075 1070 1072 1100C1068 1125 1010 1138 950 1135C905 1132 885 1120 886 1090C900 1030 905 960 890 910Z"/>
<path d="M985 1075C1010 1080 1030 1092 1032 1108C1032 1118 1026 1124 1018 1128" fill="none"/>
<path stroke="none" d="M1010 470C960 410 900 385 820 385C700 390 600 440 480 560C440 598 400 640 400 640C350 700 325 760 338 830C345 870 365 905 400 925C470 965 560 990 575 965C575 945 480 930 432 935C520 900 640 860 700 840C760 890 830 910 890 897L1130 890C1160 880 1175 820 1180 760C1182 700 1180 665 1165 650C1150 635 1115 640 1105 670C1095 700 1090 730 1082 752L945 750C925 760 918 790 935 795C965 780 1000 700 1022 620C1035 570 1035 520 1030 505Z"/>
<path fill="none" d="M1010 470C960 410 900 385 820 385C700 390 600 440 480 560C440 598 400 640 400 640C350 700 325 760 338 830C345 870 365 905 400 925C470 965 560 990 575 965C575 945 480 930 432 935"/>
<path fill="none" d="M206 1130C215 1075 248 990 290 950C318 926 380 926 432 935"/>
<path fill="none" d="M700 840C760 890 830 910 890 897L1130 890C1160 880 1175 820 1180 760C1182 700 1180 665 1165 650C1150 635 1115 640 1105 670C1095 700 1090 730 1082 752L945 750C925 760 918 790 935 795C965 780 1000 700 1022 620C1035 570 1035 520 1030 505"/>
<path d="M750 625C715 690 690 750 690 795C695 840 730 880 800 900" fill="none"/>
<path d="M400 645C420 700 450 735 500 770C540 795 570 810 590 815C620 808 660 802 690 800" fill="none"/>
<path d="M1120 648C1112 680 1108 705 1108 725M1145 650C1138 680 1136 705 1136 728" fill="none" stroke-width="3"/>
</g>
<path d="M345 878C365 910 400 928 432 935C400 915 372 895 358 872Z" fill="#2e3033"/>
<path d="M700 840C750 890 830 915 890 925L886 897C820 905 750 880 712 835Z" fill="#2e3033"/>
<path d="M850 1130L890 1085L892 1128Z" fill="#2e3033"/>
<circle cx="1085" cy="450" r="66" fill="#fff" stroke="#2a2c2f" stroke-width="5.5"/>
<path d="M1018 478C1000 420 1045 375 1095 382C1120 385 1135 398 1142 412C1110 405 1080 420 1068 445C1055 465 1035 475 1018 478Z" fill="#2e3033"/>
<ellipse cx="1080" cy="440" rx="12" ry="8" fill="#fff" stroke="#2e3033" stroke-width="3" transform="rotate(-30 1080 440)"/>
</svg>
<div class="et" style="left:2670px;width:840px;top:1544.7px;letter-spacing:0px">No monitoring data</div>
<div class="ed" style="left:2670px;width:840px;top:1610.2px;letter-spacing:0.14px">Please contact the administrator to configure Uptime in the system settings.</div>
<svg class="abs" style="left:0;top:0" width="3528" height="1810" viewBox="0 0 3528 1810">
<path fill="#d0020f" fill-rule="evenodd" d="M3399.8 10.3h57.9a3 3 0 0 1 3 3v51.5a3 3 0 0 1-3 3h-57.9a3 3 0 0 1-3-3v-51.5a3 3 0 0 1 3-3zM3404.8 18.2v41.7h48.2v-41.7z"/>
<path d="M3151.5 171.8L3349 64.6" stroke="#d0020f" stroke-width="8" fill="none"/>
<path d="M3379.2 48.2L3337.5 52.7L3352.6 80.6Z" fill="#d0020f"/>
<text x="3026.5" y="228.9" font-family="Liberation Sans, sans-serif" font-size="41.5" fill="#d0020f" stroke="#d0020f" stroke-width=".7" letter-spacing="-.9">Open filter</text>
</svg>
</div>
</body></html>
